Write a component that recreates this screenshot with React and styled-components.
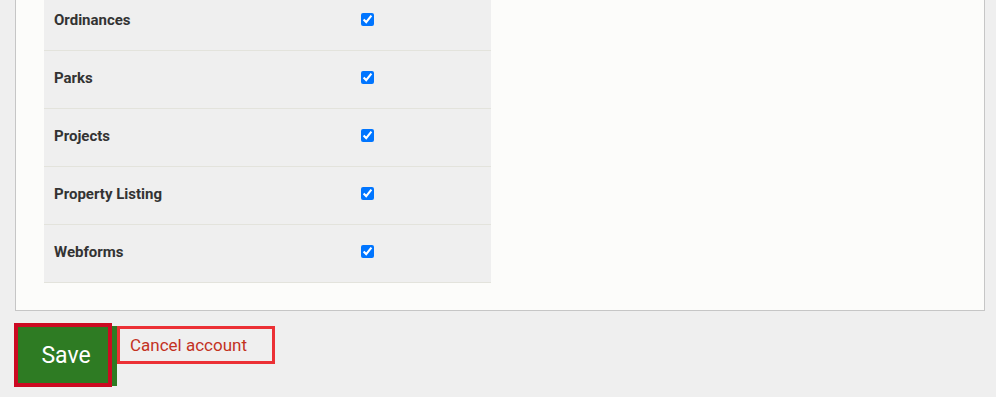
import React from "react";
import styled, { createGlobalStyle } from "styled-components";

const Global = createGlobalStyle`
  html, body { margin: 0; padding: 0; background: #efefef; }
  body { font-family: Roboto, "Liberation Sans", Arial, sans-serif; overflow: hidden; }
  * { box-sizing: border-box; }
`;

const Page = styled.div`
  width: 996px;
  height: 397px;
  overflow: hidden;
  background: #efefef;
`;

const Panel = styled.div`
  margin: -7px 0 0 15px;
  width: 970px;
  background: #fcfcfa;
  border: 1px solid #c6c6c6;
  border-top: none;
  padding: 0 28px 27px;
`;

const Table = styled.div`
  width: 447px;
  background: #efefef;
  display: grid;
  grid-template-columns: 307px 1fr;
`;

const Cell = styled.div`
  height: 58px;
  display: flex;
  align-items: center;
  padding: 0 0 4px 10px;
  border-bottom: 1px solid #e3e3dc;
  font-size: 15px;
  font-weight: 700;
  color: #333333;
`;

const Check = styled.input.attrs({ type: "checkbox" })`
  width: 13px;
  height: 13px;
  margin: 0;
  accent-color: #0075ff;
`;

const Actions = styled.div`
  display: flex;
  align-items: flex-start;
  margin: 15px 0 0 14px;
`;

const SaveWrap = styled.div`
  position: relative;
  width: 103px;
  height: 60px;
`;

const SaveButton = styled.button`
  display: block;
  width: 103px;
  height: 60px;
  border: none;
  margin: 0;
  background: #2e7b23;
  color: #ffffff;
  font-family: Roboto, "Liberation Sans", Arial, sans-serif;
  font-size: 23px;
  padding: 0 0 1px 1px;
  cursor: pointer;
`;

const FocusRing = styled.span`
  position: absolute;
  left: 0;
  top: -3px;
  width: 98px;
  height: 64px;
  border: 4px solid #cc0a22;
  pointer-events: none;
`;

const CancelLink = styled.a`
  display: flex;
  align-items: center;
  width: 158px;
  height: 38px;
  border: 3px solid #ec3035;
  padding: 0 0 1px 10px;
  color: #c3321f;
  font-size: 17px;
  text-decoration: none;
`;

const rows = ["Ordinances", "Parks", "Projects", "Property Listing", "Webforms"];

export default function App() {
  return (
    <Page>
      <Global />
      <Panel>
        <Table>
          {rows.map((r) => (
            <React.Fragment key={r}>
              <Cell>{r}</Cell>
              <Cell>
                <Check defaultChecked />
              </Cell>
            </React.Fragment>
          ))}
        </Table>
      </Panel>
      <Actions>
        <SaveWrap>
          <SaveButton>Save</SaveButton>
          <FocusRing />
        </SaveWrap>
        <CancelLink href="#">Cancel account</CancelLink>
      </Actions>
    </Page>
  );
}
